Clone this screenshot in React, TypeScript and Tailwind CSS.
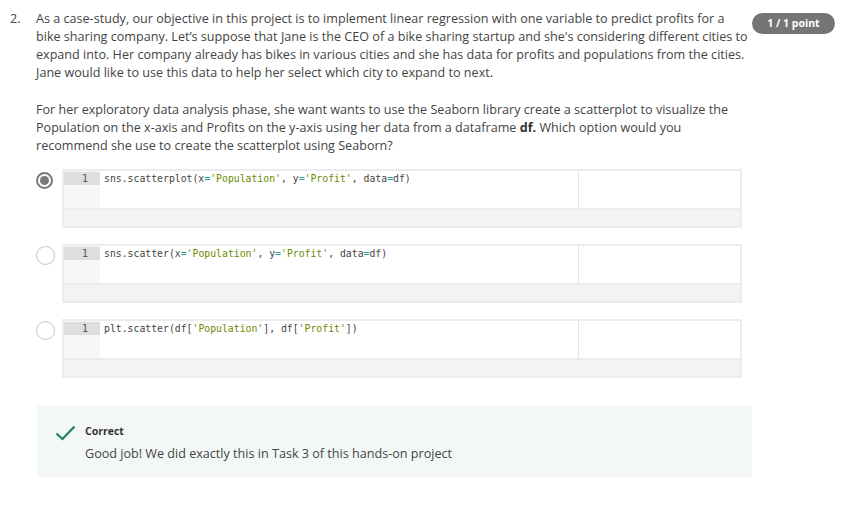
import React from "react";

const sans = "font-['Open_Sans',sans-serif]";
const mono = "font-['DejaVu_Sans_Mono',monospace]";

type Tok = { t: string; c?: "str" | "op" };

function Code({ tokens }: { tokens: Tok[] }) {
  return (
    <div className={`${mono} h-[13px] text-[9.8px] leading-[13px] text-[#444] whitespace-pre`}>
      {tokens.map((tok, i) => (
        <span
          key={i}
          className={
            tok.c === "str" ? "text-[#6b8a00]" : tok.c === "op" ? "text-[#2a9d8f]" : undefined
          }
        >
          {tok.t}
        </span>
      ))}
    </div>
  );
}

function Radio({ checked }: { checked?: boolean }) {
  return checked ? (
    <span className="mt-[2px] flex h-[17px] w-[17px] items-center justify-center rounded-full border-[2px] border-[#7a7a7a]">
      <span className="h-[9px] w-[9px] rounded-full bg-[#7a7a7a]" />
    </span>
  ) : (
    <span className="mt-[1px] block h-[19px] w-[19px] rounded-full border-[1.5px] border-[#c4c4c4] bg-white" />
  );
}

function Option({ tokens, checked }: { tokens: Tok[]; checked?: boolean }) {
  return (
    <div className="flex">
      <div className="w-[26px] pt-[1px]">
        <Radio checked={checked} />
      </div>
      <div className="w-[680px] border-2 border-[#ececec] bg-white">
        <div className="flex h-[37px]">
          <div className="flex w-[36px] flex-col bg-[#f7f7f7]">
            <div className={`${mono} mt-[1px] h-[13px] bg-[#dedede] pr-[12px] text-right text-[9.8px] leading-[13px] text-[#555]`}>
              1
            </div>
          </div>
          <div className="flex-1 pl-[4px] pt-[1px]">
            <Code tokens={tokens} />
          </div>
          <div className="w-[162px] border-l border-[#dde4ec]" />
        </div>
        <div className="h-[18px] border-t-2 border-[#ececec] bg-[#f3f3f3]" />
      </div>
    </div>
  );
}

export default function App() {
  return (
    <div className={`${sans} min-h-[505px] w-[867px] bg-white text-[#444]`}>
      <div className="flex pt-[10px]">
        <div className="w-[36px] pl-[10px] text-[12.6px] leading-[18px]">2.</div>
        <div className="w-[716px]">
          <p className="text-[12.6px] leading-[18px]">
            As a case-study, our objective in this project is to implement linear regression with one variable to predict profits for a bike sharing company. Let’s suppose that Jane is the CEO of a bike sharing startup and she's considering different cities to expand into. Her company already has bikes in various cities and she has data for profits and populations from the cities. Jane would like to use this data to help her select which city to expand to next.
          </p>
          <p className="mt-[19px] pr-[8px] text-[12.6px] leading-[18px]">
            For her exploratory data analysis phase, she want wants to use the Seaborn library create a scatterplot to visualize the Population on the x-axis and Profits on the y-axis using her data from a dataframe <b className="text-[#333]">df.</b> Which option would you recommend she use to create the scatterplot using Seaborn?
          </p>
          <div className="mt-[14px] flex flex-col gap-[16px]">
            <Option
              checked
              tokens={[
                { t: "sns.scatterplot(x" },
                { t: "=", c: "op" },
                { t: "'Population'", c: "str" },
                { t: ", y" },
                { t: "=", c: "op" },
                { t: "'Profit'", c: "str" },
                { t: ", data" },
                { t: "=", c: "op" },
                { t: "df)" },
              ]}
            />
            <Option
              tokens={[
                { t: "sns.scatter(x" },
                { t: "=", c: "op" },
                { t: "'Population'", c: "str" },
                { t: ", y" },
                { t: "=", c: "op" },
                { t: "'Profit'", c: "str" },
                { t: ", data" },
                { t: "=", c: "op" },
                { t: "df)" },
              ]}
            />
            <Option
              tokens={[
                { t: "plt.scatter(df[" },
                { t: "'Population'", c: "str" },
                { t: "], df[" },
                { t: "'Profit'", c: "str" },
                { t: "])" },
              ]}
            />
          </div>
          <div className="ml-[1px] mt-[28px] flex h-[71px] bg-[#f3f8f6] pl-[18px] pt-[17px]">
            <svg width="21" height="16" viewBox="0 0 21 16" className="mt-[2px]">
              <path d="M1.5 8.5 L7.5 14 L19.5 1.5" fill="none" stroke="#1f8354" strokeWidth="2.2" />
            </svg>
            <div className="ml-[9px]">
              <div className="text-[10.5px] font-bold leading-[16px] text-[#333]">Correct</div>
              <div className="mt-[6px] text-[12.6px] leading-[18px] text-[#444]">
                Good job! We did exactly this in Task 3 of this hands-on project
              </div>
            </div>
          </div>
        </div>
        <div className="-mt-[1px]">
          <span className="inline-block h-[21px] w-[83px] rounded-full bg-[#757575] text-center text-[10.5px] font-bold leading-[21px] text-white">
            1 / 1 point
          </span>
        </div>
      </div>
    </div>
  );
}
